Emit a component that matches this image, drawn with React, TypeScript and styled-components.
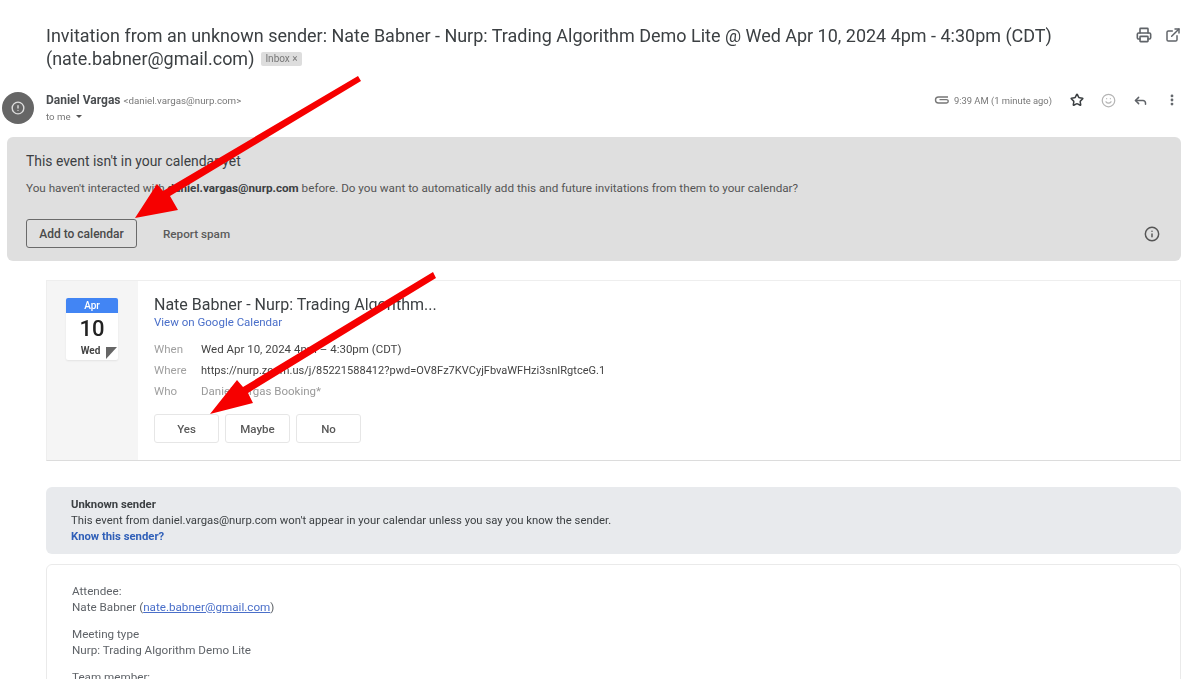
import { createGlobalStyle, styled } from "styled-components";
import { Star, Smile, Reply, MoreVertical, Printer, ExternalLink, Info, CircleAlert } from "lucide-react";

const GlobalStyle = createGlobalStyle`
  html, body {
    margin: 0;
    height: 100%;
    background: #fff;
    overflow: hidden;
  }
  body {
    font-family: Roboto, "Liberation Sans", Arial, sans-serif;
    color: #3c4043;
  }
`;

const Page = styled.div`
  position: relative;
  width: 1200px;
  height: 679px;
  overflow: hidden;
  box-sizing: border-box;
  padding-top: 24px;
  filter: blur(0.35px);
`;

const SubjectRow = styled.div`
  display: flex;
  justify-content: space-between;
  padding: 0 19px 0 46px;
`;

const Subject = styled.h1`
  margin: 0;
  width: 1050px;
  font-size: 17.98px;
  font-weight: 400;
  line-height: 23px;
  color: #3c4043;
`;

const SubjectLine = styled.div`
  display: flex;
  align-items: center;
  white-space: nowrap;
`;

const InboxTag = styled.span`
  margin-left: 7px;
  padding: 0 4px;
  font-size: 10px;
  line-height: 14px;
  border-radius: 2px;
  background: #dddddd;
  color: #777;
`;

const SubjectIcons = styled.div`
  display: flex;
  gap: 13px;
  padding-top: 3px;
  color: #5f6368;
`;

const SenderRow = styled.div`
  display: flex;
  align-items: flex-start;
  margin-top: 22px;
  padding: 0 21px 0 2px;
`;

const Avatar = styled.div`
  flex: none;
  width: 32px;
  height: 32px;
  border-radius: 50%;
  background: #666;
  color: #ddd;
  display: flex;
  align-items: center;
  justify-content: center;
`;

const SenderText = styled.div`
  margin-left: 12px;
  flex: 1;
  padding-top: 1px;
`;

const SenderName = styled.div`
  font-size: 12px;
  line-height: 14px;
  font-weight: 700;
  color: #4a4d50;
`;

const SenderAddress = styled.span`
  margin-left: 3px;
  font-size: 9.75px;
  font-weight: 400;
  color: #777;
`;

const ToMe = styled.div`
  display: flex;
  align-items: center;
  gap: 3px;
  margin-top: 2px;
  font-size: 9.7px;
  line-height: 13px;
  color: #777;
`;

const Caret = styled.span`
  display: inline-block;
  margin-left: 2px;
  border-left: 3px solid transparent;
  border-right: 3px solid transparent;
  border-top: 3px solid #555;
`;

const MetaRow = styled.div`
  display: flex;
  align-items: center;
  height: 16px;
  color: #777;
`;

const Time = styled.span`
  margin: 0 18px 0 5px;
  font-size: 9.4px;
  color: #777;
`;

const MetaIcons = styled.div`
  display: flex;
  align-items: center;
  gap: 17px;
  color: #5f6368;
`;

const Banner = styled.section`
  position: relative;
  margin: 13px 19px 0 7px;
  height: 124px;
  box-sizing: border-box;
  padding: 16px 19px 0;
  border-radius: 6px;
  background: #dfdfdf;
`;

const BannerTitle = styled.div`
  font-size: 13.9px;
  line-height: 16px;
  color: #3c4043;
`;

const BannerText = styled.p`
  margin: 12px 0 0;
  font-size: 11.7px;
  line-height: 14px;
  color: #555;
`;

const StrongText = styled.b`
  color: #3c4043;
`;

const BannerActions = styled.div`
  display: flex;
  align-items: center;
  margin-top: 24px;
  gap: 26px;
`;

const OutlineButton = styled.div`
  width: 111px;
  height: 29px;
  box-sizing: border-box;
  border: 1px solid #6a6a6a;
  border-radius: 3px;
  display: flex;
  align-items: center;
  justify-content: center;
  font-size: 12px;
  font-weight: 500;
  color: #4a4a4a;
`;

const TextButton = styled.div`
  font-size: 11.7px;
  font-weight: 500;
  color: #5a5a5a;
`;

const InfoSpot = styled.div`
  margin-left: auto;
  margin-right: 2px;
  display: flex;
  color: #555;
`;

const EventCard = styled.section`
  display: flex;
  margin: 19px 19px 0 46px;
  height: 181px;
  border: 1px solid #eeeeee;
  border-bottom-color: #dcdcdc;
  box-sizing: border-box;
`;

const DateColumn = styled.div`
  flex: none;
  width: 91px;
  background: #f5f5f5;
  padding: 17px 0 0 19px;
  box-sizing: border-box;
`;

const CalendarLeaf = styled.div`
  position: relative;
  width: 52px;
  height: 62px;
  background: #fff;
  border-radius: 2px;
  box-shadow: 0 1px 2px rgba(0, 0, 0, 0.08);
  text-align: center;
`;

const CalendarMonth = styled.div`
  height: 15px;
  line-height: 15px;
  background: #4285f4;
  border-radius: 2px 2px 0 0;
  color: #fff;
  font-size: 10px;
  font-weight: 500;
`;

const CalendarDay = styled.div`
  font-size: 22px;
  line-height: 24px;
  font-weight: 500;
  margin-top: 4px;
  color: #222;
`;

const CalendarWeekday = styled.div`
  font-size: 10px;
  line-height: 12px;
  font-weight: 700;
  color: #444;
  padding-right: 3px;
  margin-top: 4px;
`;

const CalendarFold = styled.div`
  position: absolute;
  right: 1px;
  bottom: 1px;
  width: 0;
  height: 0;
  border-top: 12px solid #666;
  border-right: 11px solid transparent;
`;

const EventBody = styled.div`
  flex: 1;
  padding: 15px 0 0 16px;
`;

const EventTitle = styled.div`
  font-size: 16px;
  line-height: 18px;
  color: #3c4043;
`;

const CalendarLink = styled.div`
  font-size: 11.5px;
  line-height: 15px;
  margin-top: 1px;
  color: #4a6fc9;
`;

const Details = styled.div`
  display: grid;
  grid-template-columns: 47px 1fr;
  grid-auto-rows: 21px;
  margin-top: 9px;
  font-size: 11.5px;
  line-height: 21px;
`;

const DetailLabel = styled.div`
  color: #a0a0a0;
`;

const DetailValue = styled.div<{ $muted?: boolean; $tight?: boolean }>`
  color: ${(props) => (props.$muted ? "#999" : "#444")};
  font-size: ${(props) => (props.$tight ? "11.05px" : "11.5px")};
`;

const Rsvp = styled.div`
  display: flex;
  gap: 6px;
  margin-top: 12px;
`;

const RsvpButton = styled.div`
  width: 65px;
  height: 29px;
  box-sizing: border-box;
  border: 1px solid #e6e6e6;
  border-radius: 3px;
  background: #fff;
  display: flex;
  align-items: center;
  justify-content: center;
  font-size: 11.5px;
  font-weight: 500;
  color: #5a5a5a;
`;

const SenderNotice = styled.section`
  margin: 26px 19px 0 46px;
  height: 67px;
  box-sizing: border-box;
  padding: 10px 25px 0;
  border-radius: 6px;
  background: #e8eaed;
  font-size: 11.3px;
  line-height: 16px;
  color: #3c4043;
`;

const NoticeTitle = styled.div`
  font-weight: 700;
`;

const NoticeLink = styled.div`
  font-weight: 700;
  color: #2f5fb8;
`;

const Attendee = styled.section`
  margin: 10px 19px 0 46px;
  height: 130px;
  box-sizing: border-box;
  padding: 18px 25px 0;
  border: 1px solid #eaeaea;
  border-radius: 6px;
  font-size: 11.67px;
  line-height: 16px;
  color: #5f6368;
`;

const AttendeeBlock = styled.div`
  margin-bottom: 11px;
`;

const MailLink = styled.span`
  color: #4a6fc9;
  text-decoration: underline;
`;

const ArrowLayer = styled.svg`
  position: absolute;
  left: 0;
  top: 0;
  pointer-events: none;
`;

export default function App() {
  return (
    <Page>
      <GlobalStyle />
      <SubjectRow>
        <Subject>
          <SubjectLine>
            Invitation from an unknown sender: Nate Babner - Nurp: Trading Algorithm Demo Lite @ Wed Apr 10, 2024 4pm - 4:30pm (CDT)
          </SubjectLine>
          <SubjectLine>
            (nate.babner@gmail.com)
            <InboxTag>Inbox ×</InboxTag>
          </SubjectLine>
        </Subject>
        <SubjectIcons>
          <Printer size={16} strokeWidth={2.4} />
          <ExternalLink size={16} strokeWidth={2.2} />
        </SubjectIcons>
      </SubjectRow>

      <SenderRow>
        <Avatar>
          <CircleAlert size={14} strokeWidth={2.4} />
        </Avatar>
        <SenderText>
          <SenderName>
            Daniel Vargas
            <SenderAddress>&lt;daniel.vargas@nurp.com&gt;</SenderAddress>
          </SenderName>
          <ToMe>
            to me <Caret />
          </ToMe>
        </SenderText>
        <MetaRow>
          <svg width="15" height="10" viewBox="0 0 15 10" fill="none" stroke="currentColor" strokeWidth="1.4">
            <path d="M14 2H4.5a3 3 0 0 0 0 6H12.5a1.7 1.7 0 0 0 0-3.4H5.5" />
          </svg>
          <Time>9:39 AM (1 minute ago)</Time>
          <MetaIcons>
            <Star size={14} color="#3c4043" strokeWidth={2.6} />
            <Smile size={15} color="#b5b5b5" />
            <Reply size={15} strokeWidth={2.4} />
            <MoreVertical size={14} strokeWidth={2.8} />
          </MetaIcons>
        </MetaRow>
      </SenderRow>

      <Banner>
        <BannerTitle>This event isn't in your calendar yet</BannerTitle>
        <BannerText>
          You haven't interacted with <StrongText>daniel.vargas@nurp.com</StrongText> before. Do you want to automatically add this and future invitations from them to your calendar?
        </BannerText>
        <BannerActions>
          <OutlineButton>Add to calendar</OutlineButton>
          <TextButton>Report spam</TextButton>
          <InfoSpot>
            <Info size={16} strokeWidth={2.2} />
          </InfoSpot>
        </BannerActions>
      </Banner>

      <EventCard>
        <DateColumn>
          <CalendarLeaf>
            <CalendarMonth>Apr</CalendarMonth>
            <CalendarDay>10</CalendarDay>
            <CalendarWeekday>Wed</CalendarWeekday>
            <CalendarFold />
          </CalendarLeaf>
        </DateColumn>
        <EventBody>
          <EventTitle>Nate Babner - Nurp: Trading Algorithm...</EventTitle>
          <CalendarLink>View on Google Calendar</CalendarLink>
          <Details>
            <DetailLabel>When</DetailLabel>
            <DetailValue>Wed Apr 10, 2024 4pm – 4:30pm (CDT)</DetailValue>
            <DetailLabel>Where</DetailLabel>
            <DetailValue $tight>https://nurp.zoom.us/j/85221588412?pwd=OV8Fz7KVCyjFbvaWFHzi3snIRgtceG.1</DetailValue>
            <DetailLabel>Who</DetailLabel>
            <DetailValue $muted>Daniel Vargas Booking*</DetailValue>
          </Details>
          <Rsvp>
            <RsvpButton>Yes</RsvpButton>
            <RsvpButton>Maybe</RsvpButton>
            <RsvpButton>No</RsvpButton>
          </Rsvp>
        </EventBody>
      </EventCard>

      <SenderNotice>
        <NoticeTitle>Unknown sender</NoticeTitle>
        <div>This event from daniel.vargas@nurp.com won't appear in your calendar unless you say you know the sender.</div>
        <NoticeLink>Know this sender?</NoticeLink>
      </SenderNotice>

      <Attendee>
        <AttendeeBlock>
          Attendee:
          <br />
          Nate Babner (<MailLink>nate.babner@gmail.com</MailLink>)
        </AttendeeBlock>
        <AttendeeBlock>
          Meeting type
          <br />
          Nurp: Trading Algorithm Demo Lite
        </AttendeeBlock>
        <AttendeeBlock>Team member:</AttendeeBlock>
      </Attendee>

      <ArrowLayer width="1200" height="679" viewBox="0 0 1200 679">
        <polygon points="358,76 361,81 170,196 178,210 135,218 157,184 163,191" fill="#f60000" />
        <polygon points="433,272 436,278 248,393 253,403 210,414 237,380 243,387" fill="#f60000" />
      </ArrowLayer>
    </Page>
  );
}
